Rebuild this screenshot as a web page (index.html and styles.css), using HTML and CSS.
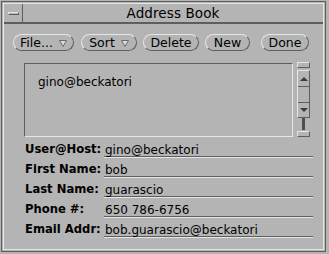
FILE: index.html
```html
<!DOCTYPE html>
<html lang="en">
<head>
    <meta charset="UTF-8">
    <title>Address Book</title>
    <link rel="stylesheet" href="styles.css">
</head>
<body>
    <div class="window">
        <div class="frame">
            <div class="titlebar">
                <div class="winmenu"><span class="dash"></span></div>
                <div class="title">Address Book</div>
            </div>
            <div class="content">
                <div class="toolbar">
                    <button class="btn btn-file">File...
                        <svg class="tri" width="8" height="7" viewBox="0 0 8 7"><polygon points="0.5,0.5 7.5,0.5 4,6.5" fill="#dcdcdc" stroke="#6a6a6a"/></svg>
                    </button>
                    <button class="btn btn-sort">Sort
                        <svg class="tri" width="8" height="7" viewBox="0 0 8 7"><polygon points="0.5,0.5 7.5,0.5 4,6.5" fill="#dcdcdc" stroke="#6a6a6a"/></svg>
                    </button>
                    <button class="btn btn-delete">Delete</button>
                    <button class="btn btn-new">New</button>
                    <button class="btn btn-done">Done</button>
                </div>
                <div class="listarea">
                    <div class="list">
                        <div class="item">gino@beckatori</div>
                    </div>
                    <div class="scrollbar">
                        <div class="cap"></div>
                        <div class="elevator">
                            <div class="arrow-box up"><span class="arrow-up"></span></div>
                            <div class="arrow-mid"></div>
                            <div class="arrow-box down"><span class="arrow-down"></span></div>
                        </div>
                        <div class="bar"></div>
                        <div class="cap cap-bottom"></div>
                    </div>
                </div>
                <div class="form">
                    <div class="row"><span class="label">User@Host:</span><span class="value">gino@beckatori</span></div>
                    <div class="row"><span class="label">First Name:</span><span class="value">bob</span></div>
                    <div class="row"><span class="label">Last Name:</span><span class="value">guarascio</span></div>
                    <div class="row"><span class="label">Phone #:</span><span class="value">650 786-6756</span></div>
                    <div class="row"><span class="label">Email Addr:</span><span class="value">bob.guarascio@beckatori</span></div>
                </div>
            </div>
        </div>
    </div>
</body>
</html>
```

FILE: styles.css
```css
body {
    margin: 0;
    background-color: #b4b4b4;
    font-family: "DejaVu Sans", sans-serif;
    font-size: 12px;
    color: #000;
}

.window {
    box-sizing: border-box;
    width: 325px;
    height: 251px;
    margin: 1px 3px 2px 1px;
    border: 1px solid #5e5e5e;
    padding: 1px;
}

.frame {
    box-sizing: border-box;
    height: 100%;
    border: 1px solid #e6e6e6;
}

/* title bar */
.titlebar {
    display: flex;
    height: 18px;
    border-bottom: 2px solid #5e5e5e;
}
.winmenu {
    width: 18px;
    border-right: 1px solid #5e5e5e;
    display: flex;
    align-items: center;
    justify-content: center;
}
.dash {
    box-sizing: border-box;
    width: 11px;
    height: 3px;
    border: 1px solid;
    border-color: #e6e6e6 #5e5e5e #5e5e5e #e6e6e6;
}
.title {
    flex: 1;
    text-align: center;
    font-size: 13.5px;
    line-height: 19px;
    letter-spacing: 0.1px;
}

/* buttons */
.toolbar {
    display: flex;
    margin: 10px 0 0 9px;
}
.btn {
    box-sizing: border-box;
    height: 17px;
    padding: 0;
    margin-right: 6px;
    border: 1px solid;
    border-color: #e6e6e6 #5e5e5e #5e5e5e #e6e6e6;
    border-radius: 9px;
    background: #b4b4b4;
    font-family: "DejaVu Sans", sans-serif;
    font-size: 12.5px;
    line-height: 15px;
    color: #000;
    display: flex;
    align-items: center;
    justify-content: center;
    gap: 6px;
}
.btn-file { width: 61px; margin-right: 7px; }
.btn-sort { width: 56px; }
.btn-delete { width: 56px; }
.btn-new { width: 45px; margin-right: 11px; }
.btn-done { width: 48px; }
.tri { margin-top: 1px; }

/* list and scrollbar */
.listarea {
    display: flex;
    align-items: flex-start;
    margin: 11px 0 0 20px;
}
.list {
    box-sizing: border-box;
    width: 269px;
    height: 74px;
    margin-top: 1px;
    border: 1px solid;
    border-color: #5e5e5e #e6e6e6 #e6e6e6 #5e5e5e;
    padding: 10px 0 0 13px;
}
.item {
    line-height: 16px;
}
.scrollbar {
    width: 13px;
    margin-left: 4px;
    display: flex;
    flex-direction: column;
}
.cap {
    box-sizing: border-box;
    height: 6px;
    border: 1px solid;
    border-color: #e6e6e6 #5e5e5e #5e5e5e #e6e6e6;
}
.elevator {
    box-sizing: border-box;
    height: 48px;
    margin-top: 2px;
    border: 1px solid;
    border-color: #e6e6e6 #5e5e5e #5e5e5e #e6e6e6;
}
.arrow-box {
    height: 15px;
    display: flex;
    align-items: center;
    justify-content: center;
}
.arrow-box.up { border-bottom: 1px solid #5e5e5e; }
.arrow-box.down { height: 14px; border-top: 1px solid #5e5e5e; }
.arrow-mid { height: 15px; }
.arrow-up {
    width: 0;
    height: 0;
    border-left: 4px solid transparent;
    border-right: 4px solid transparent;
    border-bottom: 4px solid #3c3c3c;
}
.arrow-down {
    width: 0;
    height: 0;
    border-left: 4px solid transparent;
    border-right: 4px solid transparent;
    border-top: 4px solid #3c3c3c;
}
.bar {
    width: 3px;
    height: 12px;
    margin-left: 5px;
    background: #4e4e4e;
}
.cap-bottom { margin-top: 1px; }

/* form */
.form {
    margin: 1px 10px 0 21px;
}
.row {
    display: flex;
    align-items: flex-end;
    height: 20px;
}
.label {
    width: 79px;
    font-size: 11.6px;
    font-weight: bold;
    line-height: 12px;
    margin-bottom: 3px;
}
.value {
    flex: 1;
    line-height: 12px;
    padding-left: 1px;
    margin-bottom: 1px;
    border-bottom: 1px solid #5e5e5e;
    box-shadow: 0 1px 0 #e6e6e6;
}
```
